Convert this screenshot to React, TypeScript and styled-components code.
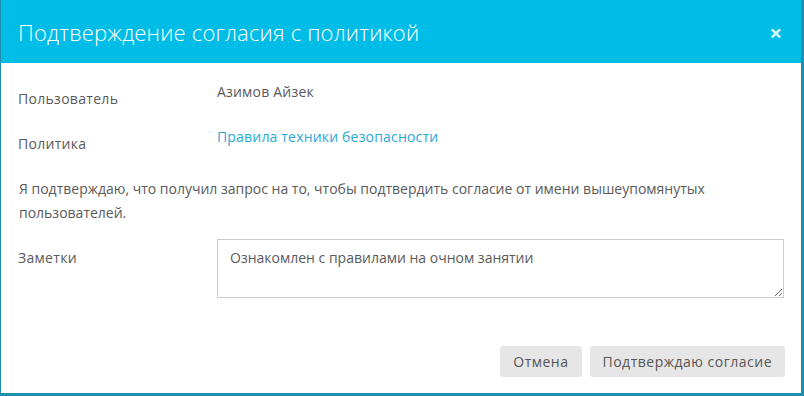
import React from "react";
import styled, { createGlobalStyle } from "styled-components";

const Global = createGlobalStyle`
  html, body { margin: 0; padding: 0; }
  body {
    background: #1f8fae;
    font-family: "Open Sans", "Liberation Sans", sans-serif;
    height: 396px;
    overflow: hidden;
  }
`;

const Dialog = styled.div`
  margin-left: 1px;
  width: 800px;
  background: #ffffff;
  display: flex;
  flex-direction: column;
`;

const Header = styled.div`
  height: 63px;
  background: #00bde8;
  display: flex;
  align-items: center;
  justify-content: space-between;
  padding: 0 18px 0 17px;
  box-sizing: border-box;
`;

const Title = styled.h4`
  margin: 0;
  font-family: "Open Sans", sans-serif;
  font-weight: 300;
  font-size: 22px;
  letter-spacing: 0.18px;
  color: #ffffff;
  line-height: 28px;
  padding-top: 1px;
`;

const Close = styled.button`
  border: 0;
  background: none;
  padding: 0;
  margin-right: 1px;
  color: rgba(255, 255, 255, 0.85);
  font-family: "Open Sans", sans-serif;
  font-weight: 700;
  font-size: 22px;
  line-height: 22px;
  cursor: pointer;
`;

const Body = styled.div`
  padding: 19px 17px 0 17px;
  display: flex;
  flex-direction: column;
`;

const Row = styled.div<{ $mb: number }>`
  display: grid;
  grid-template-columns: 199px 1fr;
  margin-bottom: ${(p) => p.$mb}px;
`;

const Label = styled.div<{ $top: number }>`
  padding-top: ${(p) => p.$top}px;
  font-size: 14px;
  letter-spacing: 0.3px;
  line-height: 20px;
  color: #5a5a5a;
`;

const Value = styled.div`
  font-size: 14px;
  letter-spacing: 0.2px;
  line-height: 20px;
  color: #5a5a5a;
`;

const Link = styled.a`
  font-size: 14px;
  letter-spacing: 0.18px;
  line-height: 20px;
  color: #29a9d6;
  text-decoration: none;
`;

const Paragraph = styled.p`
  margin: 0 0 14px 1px;
  font-size: 14px;
  line-height: 24px;
  color: #5a5a5a;
`;

const Notes = styled.textarea`
  display: block;
  width: 100%;
  height: 59px;
  box-sizing: border-box;
  border: 1px solid #cccccc;
  border-radius: 0;
  padding: 8px 12px;
  font-family: "Open Sans", sans-serif;
  font-size: 14px;
  line-height: 20px;
  color: #5a5a5a;
  resize: vertical;
  outline: none;
`;

const Footer = styled.div`
  display: flex;
  justify-content: flex-end;
  gap: 8px;
  padding: 48px 16px 16px 0;
`;

const Button = styled.button`
  height: 31px;
  padding: 0 13px;
  border: 0;
  border-radius: 3px;
  background: #e6e6e6;
  color: #555555;
  font-family: "Open Sans", sans-serif;
  font-size: 14px;
  letter-spacing: 0.5px;
  cursor: pointer;
`;

export default function App() {
  return (
    <>
      <Global />
      <Dialog>
        <Header>
          <Title>Подтверждение согласия с политикой</Title>
          <Close aria-label="Закрыть">×</Close>
        </Header>
        <Body>
          <Row $mb={18}>
            <Label $top={7}>Пользователь</Label>
            <Value>Азимов Айзек</Value>
          </Row>
          <Row $mb={23}>
            <Label $top={7}>Политика</Label>
            <Link href="#">Правила техники безопасности</Link>
          </Row>
          <Paragraph>
            Я подтверждаю, что получил запрос на то, чтобы подтвердить согласие от имени вышеупомянутых
            пользователей.
          </Paragraph>
          <Row $mb={0}>
            <Label $top={9}>Заметки</Label>
            <Notes defaultValue="Ознакомлен с правилами на очном занятии" />
          </Row>
        </Body>
        <Footer>
          <Button>Отмена</Button>
          <Button>Подтверждаю согласие</Button>
        </Footer>
      </Dialog>
    </>
  );
}
